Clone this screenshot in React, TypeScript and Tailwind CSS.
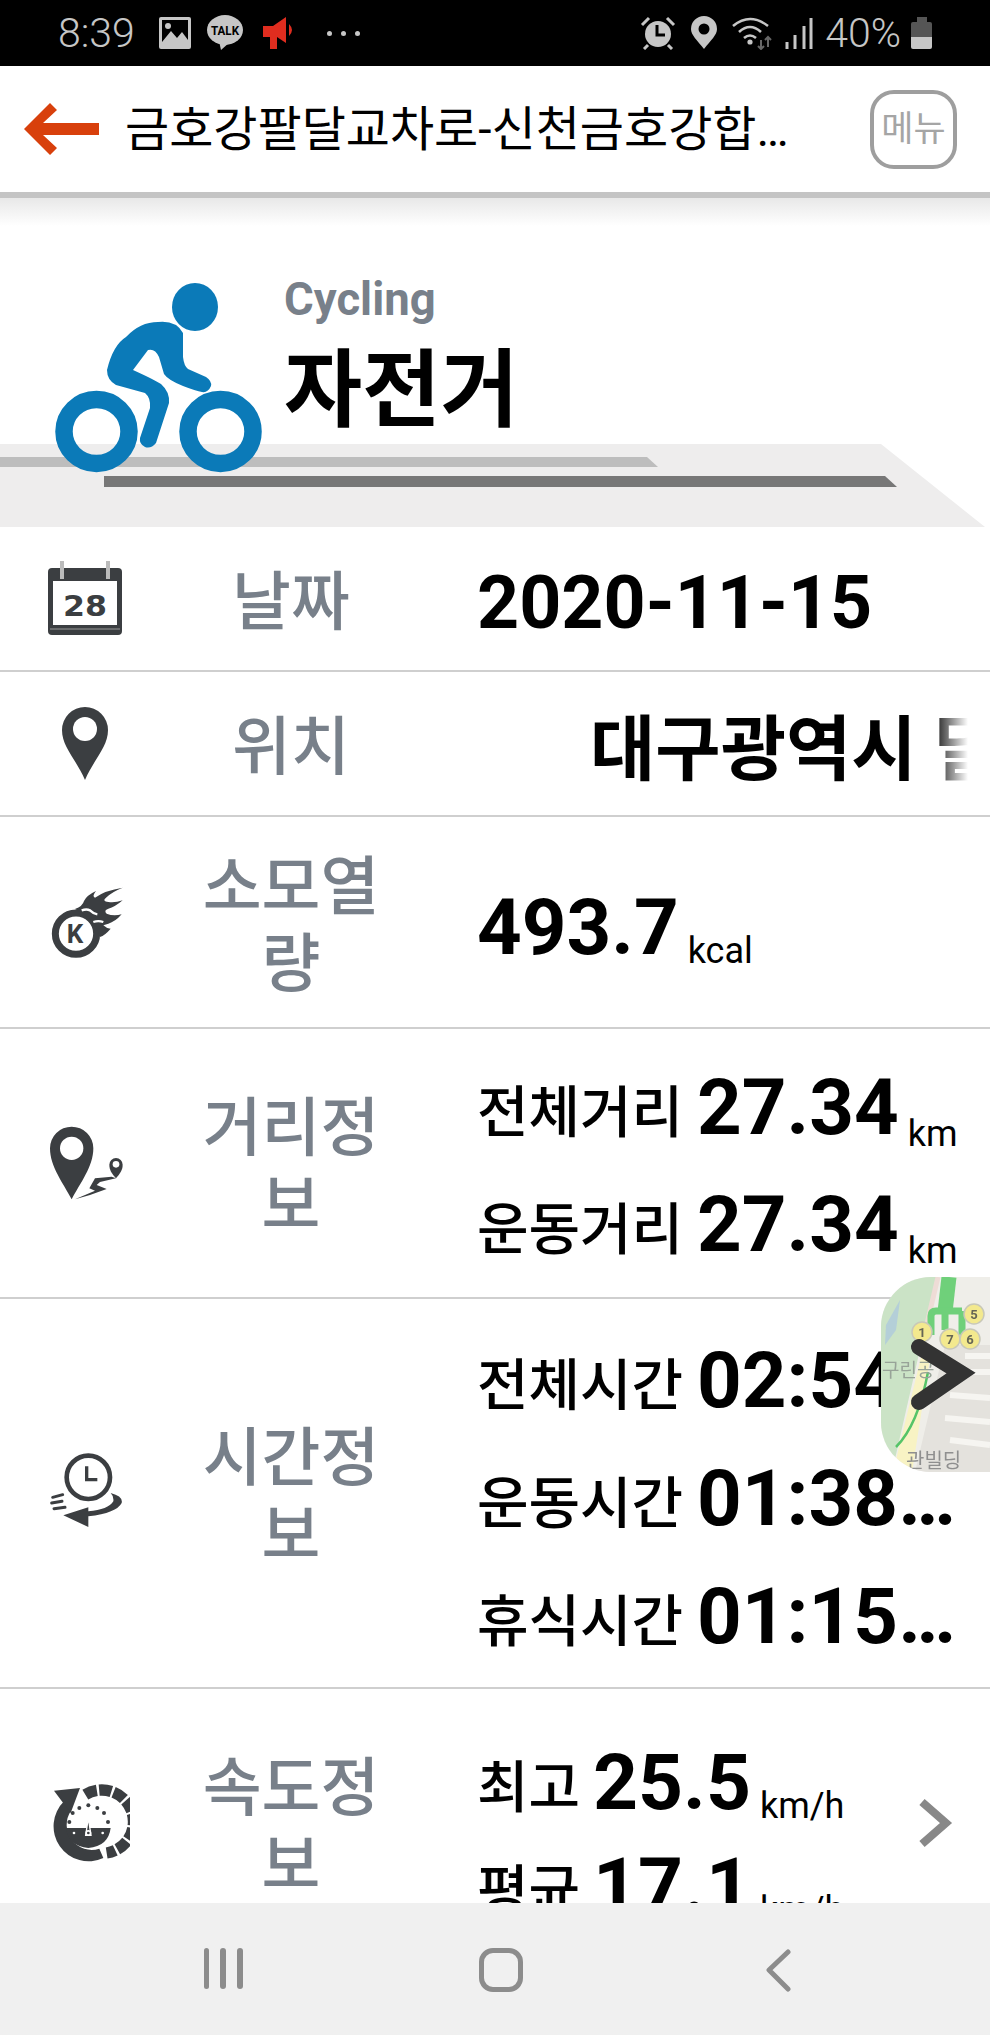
import React from "react";

const FONT = "font-['Roboto','Noto_Sans_CJK_KR',sans-serif]";
const G = "#c6c6c6";

function StatusBar() {
  return (
    <div className="relative h-[66px] shrink-0 bg-black text-[#c6c6c6]">
      <div className="flex h-full items-center">
        <span className="ml-[58px] w-[85px] text-[41px] font-light leading-none">8:39</span>
        <svg width="34" height="34" viewBox="0 0 34 34" className="ml-[15px]">
          <rect x="1" y="1" width="32" height="32" rx="2" fill={G} />
          <rect x="4" y="4" width="26" height="22" fill="#000" />
          <circle cx="10" cy="10" r="3" fill={G} />
          <path d="M4 26 L13 15 L19 22 L24 16 L30 24 V26 Z" fill={G} />
        </svg>
        <svg width="38" height="36" viewBox="0 0 38 36" className="ml-[14px]">
          <ellipse cx="19" cy="15" rx="18" ry="15" fill={G} />
          <path d="M13 26 L15 35 L24 27 Z" fill={G} />
          <text x="19" y="20" textAnchor="middle" fontSize="12.5" fontWeight="700" fill="#000" fontFamily="Roboto" textLength="28" lengthAdjust="spacingAndGlyphs">TALK</text>
        </svg>
        <svg width="34" height="34" viewBox="0 0 34 34" className="ml-[18px]">
          <path d="M1 10 H11 L24 1 V27 L15 21 V33 H8 V21 H1 Z" fill="#e02d1f" />
          <path d="M27 8 Q33 14 27 20 Z" fill="#e02d1f" />
        </svg>
        <div className="ml-[31px] flex gap-[9px]">
          <i className="h-[5px] w-[5px] rounded-full bg-[#c6c6c6]" />
          <i className="h-[5px] w-[5px] rounded-full bg-[#c6c6c6]" />
          <i className="h-[5px] w-[5px] rounded-full bg-[#c6c6c6]" />
        </div>
        <div className="flex-1" />
        <svg width="36" height="34" viewBox="0 0 36 34">
          <circle cx="18" cy="18" r="13" fill={G} />
          <path d="M17 9 V19 H25" stroke="#000" strokeWidth="3" fill="none" />
          <path d="M2 9 L9 2 M34 9 L27 2 M8 29 L4 33 M28 29 L32 33" stroke={G} strokeWidth="3" />
        </svg>
        <svg width="26" height="34" viewBox="0 0 26 34" className="ml-[15px]">
          <path d="M13 33 C6 24 0 19 0 13 A13 13 0 0 1 26 13 C26 19 20 24 13 33 Z" fill={G} />
          <circle cx="13" cy="13" r="5.5" fill="#000" />
        </svg>
        <svg width="40" height="34" viewBox="0 0 40 34" className="ml-[15px]">
          <g fill="none" stroke={G} strokeWidth="2.6">
            <path d="M1 10 Q18 -4 36 10" />
            <path d="M7 16 Q18 6 29 16" />
            <path d="M12 22 Q18 17 24 22" />
          </g>
          <circle cx="18" cy="26" r="2.6" fill={G} />
          <path d="M29 33 V24 M26 30 L29 33 L32 30" stroke="#666" strokeWidth="2" fill="none" />
          <path d="M36 31 V21 M33 24 L36 21 L39 24" stroke="#666" strokeWidth="2" fill="none" />
        </svg>
        <svg width="30" height="34" viewBox="0 0 30 34" className="ml-[12px]">
          <path d="M3 26 V33 M11 19 V33 M20 10 V33 M27 2 V33" stroke={G} strokeWidth="3" />
        </svg>
        <span className="ml-[11px] text-[41px] font-light leading-none">40%</span>
        <div className="ml-[10px] mr-[58px] flex w-[21px] flex-col items-center">
          <div className="h-[5px] w-[10px] bg-[#555]" />
          <div className="h-[15px] w-[21px] rounded-t-[2px] bg-[#555]" />
          <div className="h-[12px] w-[21px] rounded-b-[2px] bg-[#c6c6c6]" />
        </div>
      </div>
    </div>
  );
}

function Header() {
  return (
    <div className="relative z-10 flex h-[132px] shrink-0 items-start border-b-[6px] border-[#c4c4c4] bg-white">
      <div className="flex h-[126px] w-full items-center">
        <svg width="76" height="52" viewBox="0 0 76 52" className="ml-[24px]">
          <path d="M26 0 L33 7 L19 20 H75 V32 H19 L33 45 L26 52 L0 26 Z" fill="#d8400c" />
        </svg>
        <div className="ml-[25px] mt-[2px] w-[670px] truncate text-[48px] leading-none text-black">금호강팔달교차로-신천금호강합류점</div>
        <div className="ml-[75px] flex h-[79px] w-[87px] items-center justify-center rounded-[24px] border-4 border-[#9e9e9e] text-[35px] leading-none text-[#a5a5a5]">
          메뉴
        </div>
      </div>
    </div>
  );
}

function Hero() {
  return (
    <div className="relative h-[329px] shrink-0 bg-white">
      <div className="absolute inset-x-0 top-0 h-[28px] bg-gradient-to-b from-[#e8e8e8] to-white" />
      <svg width="990" height="329" viewBox="0 198 990 329" className="absolute left-0 top-0">
        <path d="M0 444 H881 L985 527 H0 Z" fill="#eeeded" />
        <path d="M0 457 H647 L658 467 H0 Z" fill="#bdbdbd" />
        <path d="M104 476 H885 L897 487 H104 Z" fill="#777777" />
        <ellipse cx="195" cy="307" rx="23" ry="24" fill="#0b7ab8" />
        <ellipse cx="96.5" cy="431.5" rx="32.5" ry="32" fill="none" stroke="#0b7ab8" strokeWidth="17.5" />
        <ellipse cx="220.5" cy="431.5" rx="32.5" ry="32" fill="none" stroke="#0b7ab8" strokeWidth="17.5" />
        <path
          d="M158 322 Q176 320 183 333 L183 357 Q184 366 188 369 L206 377 Q212 381 211 386 Q208 393 202 392 Q196 391 183 386 Q168 380 164 374 L159 357 Q155 348 148 350 L133 370 Q155 380 161 384 Q170 392 169 403 L156 443 Q151 449 145 447 Q139 444 140 438 L150 408 Q151 398 145 393 L116 385 Q107 380 107 370 Q113 345 126 337 Q140 322 158 322 Z"
          fill="#0b7ab8"
        />
      </svg>
      <div className="relative ml-[284px] pt-[77px]">
        <div className="text-[45.5px] font-bold leading-[50px] text-[#78808a]">Cycling</div>
        <div className="mt-[21px] text-[85px] font-bold leading-[90px] text-black">자전거</div>
      </div>
    </div>
  );
}

const C = "#3b3e41";

const icons = {
  calendar: (
    <svg width="74" height="74" viewBox="0 0 74 74" className="-translate-y-[1px]">
      <rect x="0" y="7" width="74" height="67" rx="4" fill={C} />
      <rect x="5" y="20" width="64" height="44" fill="#fff" />
      <rect x="12" y="0" width="4" height="18" fill="#bbb" />
      <rect x="58" y="0" width="4" height="18" fill="#bbb" />
      <path d="M2 68 H72" stroke="#999" strokeWidth="1" />
      <text x="37" y="55" textAnchor="middle" fontSize="29" fontWeight="700" fill={C} fontFamily="DejaVu Sans" textLength="44" lengthAdjust="spacingAndGlyphs">28</text>
    </svg>
  ),
  pin: (
    <svg width="46" height="74" viewBox="0 0 46 74">
      <path d="M23 73 C14 52 0 40 0 23 A23 23 0 0 1 46 23 C46 40 32 52 23 73 Z" fill={C} />
      <circle cx="23" cy="22" r="12" fill="#fff" />
    </svg>
  ),
  kcal: (
    <svg width="90" height="90" viewBox="0 0 270 270">
      <circle cx="108" cy="170" r="62" fill="none" stroke={C} strokeWidth="21" />
      <path d="M105 96 Q128 88 132 72 Q140 55 168 42 Q155 58 165 62 Q195 40 248 32 Q215 45 198 62 Q185 72 205 75 Q225 78 248 70 Q225 90 205 95 Q190 100 200 110 Q220 118 245 112 Q225 135 205 140 L190 145 Q200 155 212 155 Q195 175 180 180 Q172 150 150 125 Q130 108 105 96 Z" fill={C} />
      <path d="M125 100 Q140 95 150 100 Q160 110 172 112" fill="none" stroke="#fff" strokeWidth="7" />
      <path d="M160 135 Q175 130 190 135" fill="none" stroke="#fff" strokeWidth="7" />
      <text x="105" y="198" textAnchor="middle" fontSize="78" fontWeight="700" fill={C} fontFamily="Roboto">K</text>
    </svg>
  ),
  distance: (
    <svg width="90" height="90" viewBox="0 0 270 270" className="translate-y-[2px]">
      <path d="M95 238 C70 190 30 140 30 85 A65 65 0 0 1 160 85 C160 140 120 190 95 238 Z" fill={C} />
      <circle cx="95" cy="85" r="35" fill="#fff" />
      <path d="M228 175 C215 160 208 150 208 134 A20 20 0 0 1 248 134 C248 150 240 160 228 175 Z" fill={C} />
      <circle cx="228" cy="133" r="10" fill="#fff" />
      <path d="M105 238 L165 212 L148 205 L165 175 L215 170 L228 175 L180 186 L170 195 L200 207 L150 225 Z" fill={C} />
    </svg>
  ),
  clock: (
    <svg width="90" height="90" viewBox="0 0 270 270">
      <circle cx="145" cy="88" r="65" fill="none" stroke={C} strokeWidth="14" />
      <path d="M140 55 V95 H172" fill="none" stroke={C} strokeWidth="10" />
      <path d="M212 135 Q250 145 245 165 Q230 195 145 205 L145 237 L70 202 L145 178 L145 190 Q205 185 220 160 Q222 145 212 135 Z" fill={C} />
      <path d="M38 148 L68 140 M35 165 L66 160 M42 182 L75 178" stroke={C} strokeWidth="9" strokeLinecap="round" />
    </svg>
  ),
  speed: (
    <svg width="90" height="90" viewBox="0 0 270 270">
      <path d="M72 70 A105 105 0 0 0 190 240 L178 212 A75 75 0 0 1 92 100 Z" fill={C} />
      <path d="M42 38 L120 30 L92 105 Z" fill={C} />
      <path d="M136 50 A95 95 0 1 1 200 225" fill="none" stroke={C} strokeWidth="34" strokeDasharray="37 7" />
      <path d="M78 150 H212 Q205 205 145 210 Q85 205 78 150 Z" fill={C} />
      <path d="M145 120 L153 172 H137 Z" fill={C} stroke="#fff" strokeWidth="4" />
      <circle cx="145" cy="165" r="9" fill="#fff" />
      <circle cx="145" cy="165" r="4" fill={C} />
      <g fill="#fff">
        <circle cx="102" cy="165" r="4" />
        <circle cx="188" cy="165" r="4" />
      </g>
      <g fill={C}>
        <circle cx="88" cy="132" r="6" />
        <circle cx="98" cy="105" r="6" />
        <circle cx="118" cy="90" r="6" />
        <circle cx="145" cy="82" r="6" />
        <circle cx="172" cy="90" r="6" />
        <circle cx="192" cy="105" r="6" />
        <circle cx="204" cy="132" r="6" />
      </g>
    </svg>
  ),
};

function Row({ h, icon, label, children }: { h: string; icon: React.ReactNode; label: string; children: React.ReactNode }) {
  return (
    <div className={`flex shrink-0 items-center border-b-2 border-[#cfcfcf] bg-white ${h}`}>
      <div className="flex w-[170px] shrink-0 justify-center">{icon}</div>
      <div className="ml-[31px] mt-[8px] w-[180px] shrink-0 text-center text-[64px] font-medium leading-[77px] text-[#78808a]">{label}</div>
      <div className="ml-[96px] min-w-0 flex-1">{children}</div>
    </div>
  );
}

function Stat({ name, value, unit }: { name: string; value: string; unit: string }) {
  return (
    <div className="flex items-baseline whitespace-nowrap">
      <span className="w-[220px] shrink-0 -translate-y-[2px] text-[56px] font-medium text-black">{name}</span>
      <span className="min-w-0 max-w-[260px] truncate text-[78px] font-bold text-black">{value}</span>
      <span className="ml-[9px] translate-y-[12px] text-[36px] text-black">{unit}</span>
    </div>
  );
}

function Speed({ name, value, unit }: { name: string; value: string; unit: string }) {
  return (
    <div className="flex items-baseline whitespace-nowrap">
      <span className="mr-[13px] -translate-y-[2px] text-[56px] font-medium text-black">{name}</span>
      <span className="text-[78.5px] font-bold text-black">{value}</span>
      <span className="ml-[9px] translate-y-[9px] text-[36px] text-black">{unit}</span>
    </div>
  );
}

function MapButton() {
  return (
    <div className="absolute right-0 top-[1277px] z-20 h-[195px] w-[109px] overflow-hidden rounded-l-[50px] bg-[#efeee9]">
      <svg width="109" height="195" viewBox="881 1277 109 195" className="absolute left-0 top-0 blur-[0.7px]">
        <path d="M881 1277 H937 L921 1345 L892 1472 H881 Z" fill="#cbe3c6" />
        <path d="M886 1325 L900 1300 L896 1330 L885 1345 Z" fill="#a9c6e0" opacity="0.7" />
        <path d="M924 1345 L932 1345 L912 1472 L893 1472 Z" fill="#f8f3c4" />
        <path d="M938 1277 L922 1345" stroke="#eedcd6" strokeWidth="5" fill="none" />
        <path d="M945 1345 H990 V1472 H915 L932 1400 Z" fill="#e4e2dd" />
        <path d="M965 1356 H990 M960 1372 H990 M950 1395 L990 1398 M945 1418 L990 1422 M950 1440 L990 1445" stroke="#f6f5f1" strokeWidth="6" />
        <path d="M949 1277 L945 1312" stroke="#6fd07a" strokeWidth="15" fill="none" />
        <path d="M931 1335 V1316 Q931 1311 936 1311 H962 M962 1311 V1335 M945 1311 V1330" stroke="#6fd07a" strokeWidth="7" fill="none" />
        <path d="M928 1372 Q918 1425 896 1447" stroke="#55c468" strokeWidth="2.5" fill="none" />
        <g fill="#f3e98e" stroke="#c8c8b8" strokeWidth="1.5">
          <circle cx="922" cy="1332" r="10" />
          <circle cx="950" cy="1339" r="10" />
          <circle cx="970" cy="1339" r="10" />
          <circle cx="974" cy="1314" r="10" />
        </g>
        <g fontSize="13" fontWeight="700" textAnchor="middle" fill="#665" fontFamily="Roboto">
          <text x="922" y="1337">1</text>
          <text x="950" y="1344">7</text>
          <text x="970" y="1344">6</text>
          <text x="974" y="1319">5</text>
        </g>
        <text x="882" y="1377" fontSize="19" fill="#98a398" fontFamily="Noto Sans CJK KR">구린공</text>
        <text x="906" y="1468" fontSize="20" fill="#8f8f8f" fontFamily="Noto Sans CJK KR">관빌딩</text>
      </svg>
      <svg width="109" height="195" viewBox="881 1277 109 195" className="absolute left-0 top-0">
        <path d="M919 1347 L961 1373 L919 1402" fill="none" stroke="#333" strokeWidth="16" strokeLinecap="round" strokeLinejoin="miter" />
      </svg>
    </div>
  );
}

function NavBar() {
  return (
    <div className="relative z-10 flex h-[132px] shrink-0 items-start bg-[#f0f0f0] pt-[45px]">
      <div className="ml-[204px] flex gap-[11px]">
        <i className="h-[41px] w-[5px] rounded-full bg-[#8c8c8c]" />
        <i className="h-[41px] w-[6px] rounded-full bg-[#8c8c8c]" />
        <i className="h-[41px] w-[6px] rounded-full bg-[#8c8c8c]" />
      </div>
      <div className="ml-[236px] h-[44px] w-[44px] rounded-[14px] border-[5px] border-[#8c8c8c]" />
      <svg width="28" height="44" viewBox="0 0 28 44" className="ml-[241px]">
        <path d="M24 4 L5 22 L24 41" fill="none" stroke="#8c8c8c" strokeWidth="5" strokeLinecap="round" strokeLinejoin="round" />
      </svg>
    </div>
  );
}

export default function App() {
  return (
    <div className={`relative flex h-[2035px] w-[990px] flex-col overflow-hidden bg-white ${FONT}`}>
      <StatusBar />
      <Header />
      <div className="min-h-0 flex-1 overflow-hidden">
        <Hero />
        <Row h="h-[145px]" icon={icons.calendar} label="날짜">
          <div className="mt-[10px] text-[73.5px] font-bold leading-none text-black">2020-11-15</div>
        </Row>
        <Row h="h-[145px]" icon={icons.pin} label="위치">
          <div className="relative mr-[22px] mt-[12px] overflow-hidden pl-[113px] whitespace-nowrap text-[71px] font-bold leading-none text-black">
            대구광역시 달서구
            <div className="absolute inset-y-0 right-0 w-[30px] bg-gradient-to-r from-white/20 to-white" />
          </div>
        </Row>
        <Row h="h-[212px]" icon={icons.kcal} label="소모열량">
          <div className="mt-[10px] flex items-baseline">
            <span className="text-[78px] font-bold text-black">493.7</span>
            <span className="ml-[9px] translate-y-[9px] text-[36px] text-black">kcal</span>
          </div>
        </Row>
        <Row h="h-[270px]" icon={icons.distance} label="거리정보">
          <div className="-mt-[20px] flex flex-col gap-[25px] [&>div]:h-[92px]">
            <Stat name="전체거리" value="27.34" unit="km" />
            <Stat name="운동거리" value="27.34" unit="km" />
          </div>
        </Row>
        <Row h="h-[390px]" icon={icons.clock} label="시간정보">
          <div className="-mt-[14px] flex flex-col gap-[26px] [&>div]:h-[92px]">
            <Stat name="전체시간" value="02:54:46" unit="" />
            <Stat name="운동시간" value="01:38:56" unit="" />
            <Stat name="휴식시간" value="01:15:50" unit="" />
          </div>
        </Row>
        <div className="relative">
          <Row h="h-[270px]" icon={icons.speed} label="속도정보">
            <div className="-mt-[2px] flex flex-col gap-[12px] [&>div]:h-[92px]">
              <Speed name="최고" value="25.5" unit="km/h" />
              <Speed name="평균" value="17.1" unit="km/h" />
            </div>
          </Row>
          <svg width="36" height="52" viewBox="0 0 36 52" className="absolute left-[917px] top-[108px]">
            <path d="M5 5 L29 26 L5 47" fill="none" stroke="#888" strokeWidth="8" />
          </svg>
        </div>
      </div>
      <NavBar />
      <MapButton />
    </div>
  );
}
